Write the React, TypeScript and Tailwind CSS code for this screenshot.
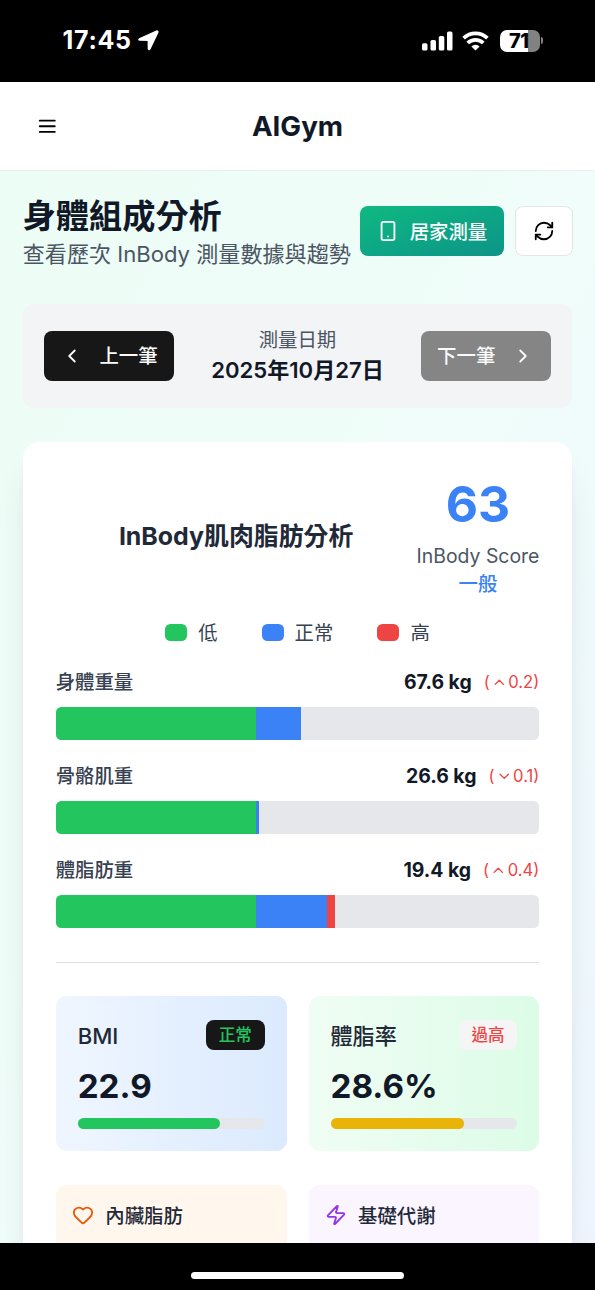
import { ChevronDown, ChevronLeft, ChevronRight, ChevronUp, Heart, RefreshCw, Smartphone, Zap } from "lucide-react";

type Segment = { color: string; width: number };

type Metric = {
  label: string;
  value: string;
  trend: "up" | "down";
  diff: string;
  segments: Segment[];
};

const legend = [
  { label: "低", color: "bg-[#22c55e]" },
  { label: "正常", color: "bg-[#3b82f6]" },
  { label: "高", color: "bg-[#ef4444]" },
];

const metrics: Metric[] = [
  {
    label: "身體重量",
    value: "67.6 kg",
    trend: "up",
    diff: "0.2",
    segments: [
      { color: "bg-[#22c55e]", width: 41.5 },
      { color: "bg-[#3b82f6]", width: 9.2 },
    ],
  },
  {
    label: "骨骼肌重",
    value: "26.6 kg",
    trend: "down",
    diff: "0.1",
    segments: [
      { color: "bg-[#22c55e]", width: 41.5 },
      { color: "bg-[#3b82f6]", width: 0.6 },
    ],
  },
  {
    label: "體脂肪重",
    value: "19.4 kg",
    trend: "up",
    diff: "0.4",
    segments: [
      { color: "bg-[#22c55e]", width: 41.5 },
      { color: "bg-[#3b82f6]", width: 14.7 },
      { color: "bg-[#ef4444]", width: 1.6 },
    ],
  },
];

const stats = [
  {
    label: "BMI",
    value: "22.9",
    status: "正常",
    card: "bg-linear-to-r from-[#eff6ff] to-[#dbeafe]",
    badge: "bg-[#171717] text-[#22c55e]",
    bar: "bg-[#22c55e]",
    percent: 76.3,
  },
  {
    label: "體脂率",
    value: "28.6%",
    status: "過高",
    card: "bg-linear-to-r from-[#f0fdf4] to-[#dcfce7]",
    badge: "bg-[#f5f5f5] text-[#ef4444]",
    bar: "bg-[#eab308]",
    percent: 71.5,
  },
];

function StatusBar() {
  return (
    <div className="flex h-[81.5px] shrink-0 items-center justify-between bg-black pl-[62.5px] pr-[52px] text-white">
      <div className="flex items-center gap-[6px]">
        <span className="text-[25px] font-bold leading-none tracking-[0.7px]">17:45</span>
        <svg width="21" height="21" viewBox="0 0 21 21" fill="currentColor" stroke="currentColor" strokeWidth="1.8" strokeLinejoin="round">
          <path d="M18.6 1.300 1.500 9c-.6.300-.5.900.1.900l8.400.1c.3 0 .5.200.5.500l.1 8.200c0 .800.700 1 1.100.2L19.600 2.300c.3-.700-.3-1.300-1-1Z" />
        </svg>
      </div>
      <div className="flex items-center">
        <svg width="31" height="20" viewBox="0 0 31 20" fill="currentColor">
          <rect x="0" y="12.200" width="5.500" height="7.300" rx="1.600" />
          <rect x="8.500" y="9" width="5.500" height="10.500" rx="1.600" />
          <rect x="16.800" y="5" width="5.500" height="14.500" rx="1.600" />
          <rect x="25" y="0.500" width="5.500" height="19" rx="1.600" />
        </svg>
        <svg className="ml-[9.5px]" width="27" height="20" viewBox="0 0 27 20" fill="none" stroke="currentColor" strokeWidth="3.700">
          <path d="M1.600 7.200a17.300 17.300 0 0 1 23.800 0" />
          <path d="M5.700 12a11.200 11.200 0 0 1 15.600 0" />
          <path d="M13.500 19.600 9.400 15.500a5.900 5.900 0 0 1 8.200 0Z" fill="currentColor" stroke="none" />
        </svg>
        <div className="ml-[11px] flex items-center gap-[1.5px]">
          <div className="flex h-[21.500px] w-[39.500px] items-center justify-center rounded-[7px] bg-linear-to-r from-white from-[71%] to-[#828282] to-[71%] pr-[2px] text-[20px] font-extrabold leading-none tracking-tight text-black">
            71
          </div>
          <div className="h-[7px] w-[2px] rounded-r-full bg-[#828282]" />
        </div>
      </div>
    </div>
  );
}

function Header() {
  return (
    <header className="flex h-[89px] shrink-0 items-center border-b border-[#e9efed] bg-white px-9">
      <button className="w-[22px] pt-[2px]">
        <svg width="22.5" height="22.5" viewBox="0 0 24 24" fill="none" stroke="black" strokeWidth="2" strokeLinecap="round">
          <path d="M4 6h16M4 12h16M4 18h16" />
        </svg>
      </button>
      <h1 className="flex-1 pt-[3px] text-center text-[27.7px] font-bold leading-none text-[#111827]">AIGym</h1>
      <div className="w-[22px]" />
    </header>
  );
}

function MetricRow({ metric }: { metric: Metric }) {
  const Trend = metric.trend === "up" ? ChevronUp : ChevronDown;
  return (
    <div>
      <div className="mb-[10.500px] flex h-[27.5px] items-center justify-between">
        <span className="text-[19.4px] font-medium text-[#374151]">{metric.label}</span>
        <div className="flex items-center gap-[12px]">
          <span className="text-[19.4px] font-bold text-[#111827]">{metric.value}</span>
          <span className="flex items-center text-[16.6px] text-[#ef4444]">
            (
            <Trend className="mx-[1px] size-[16.6px]" />
            {metric.diff})
          </span>
        </div>
      </div>
      <div className="flex h-[33.5px] overflow-hidden rounded-[5.5px] bg-[#e5e7eb]">
        {metric.segments.map((s) => (
          <div key={s.color} className={s.color} style={{ width: `${s.width}%` }} />
        ))}
      </div>
    </div>
  );
}

export default function App() {
  return (
    <div
      lang="zh-TW"
      className="flex h-[1290px] w-full flex-col overflow-hidden bg-white font-['Inter','Noto_Sans_CJK_TC',sans-serif]"
    >
      <StatusBar />
      <Header />

      <main className="min-h-0 flex-1 overflow-hidden bg-linear-to-br from-[#ecfdf5] via-[#f0fdfa] to-[#eff6ff] px-[22.7px] pt-[24px]">
        {/* Title */}
        <div className="-mr-[0.6px] flex h-[73px] items-center justify-between">
          <div className="pt-[5px]">
            <h2 className="text-[33.2px] font-bold leading-[41px] text-[#111827]">身體組成分析</h2>
            <p className="whitespace-nowrap text-[22.1px] leading-[34px] text-[#4b5563]">查看歷次 InBody 測量數據與趨勢</p>
          </div>
          <div className="flex gap-[11px]">
            <button className="flex h-[50px] w-[144px] items-center justify-center gap-[11px] rounded-[8px] bg-linear-to-br from-[#10b981] to-[#0d9488] text-[19.4px] font-medium text-white">
              <Smartphone className="size-[22px]" />
              <span className="pt-[3px]">居家測量</span>
            </button>
            <button className="flex h-[50px] w-[58px] items-center justify-center rounded-[8px] border-[1.5px] border-[#e5e5e5] bg-white text-black">
              <RefreshCw className="size-[22px]" />
            </button>
          </div>
        </div>

        {/* Date switcher */}
        <div className="mt-[36px] flex h-[104px] items-center justify-between rounded-[11px] bg-[#f3f4f6] px-[21.700px]">
          <button className="flex h-[50px] w-[130px] items-center rounded-[8px] bg-[#171717] pl-[16.5px] text-[19.4px] font-medium text-[#fafafa]">
            <ChevronLeft className="mr-[16.5px] size-[22px]" />
            <span className="pt-[2px]">上一筆</span>
          </button>
          <div className="pt-[2px] text-center">
            <div className="text-[19.4px] leading-[28px] text-[#4b5563]">測量日期</div>
            <div className="text-[22.1px] font-semibold leading-[33px] text-[#111827]">2025年10月27日</div>
          </div>
          <button className="flex h-[50px] w-[130px] items-center rounded-[8px] bg-[#858586] pl-[16.5px] text-[19.4px] font-medium text-[#fafafa]">
            <span className="pt-[2px]">下一筆</span>
            <ChevronRight className="ml-[17px] size-[22px]" />
          </button>
        </div>

        {/* Analysis card */}
        <section className="mt-[34px] h-[900px] rounded-[16.6px] bg-white px-[33px] pt-[33px] shadow-[0_28px_35px_-7px_rgba(0,0,0,0.1),0_11px_14px_-8px_rgba(0,0,0,0.1)]">
          <div className="flex h-[122px] items-center">
            <h3 className="flex-1 pt-[2px] text-center text-[24.9px] font-bold leading-none text-[#1f2937]">InBody肌肉脂肪分析</h3>
            <div className="pt-[2px] text-center">
              <div className="text-[49.8px] font-bold leading-[56px] text-[#3b82f6]">63</div>
              <div className="mt-[10px] text-[19.4px] leading-[28px] text-[#4b5563]">InBody Score</div>
              <div className="text-[19.4px] font-medium leading-[28px] text-[#3b82f6]">一般</div>
            </div>
          </div>

          <div className="mt-[22px] flex h-[27.5px] items-center justify-center gap-[44px]">
            {legend.map((l) => (
              <div key={l.label} className="flex items-center gap-[11px]">
                <div className={`h-[17px] w-[22px] rounded-[5.5px] ${l.color}`} />
                <span className="pt-[2px] text-[19.4px] leading-[27px] text-[#374151]">{l.label}</span>
              </div>
            ))}
          </div>

          <div className="mt-[22.800px] flex flex-col gap-[22.500px]">
            {metrics.map((m) => (
              <MetricRow key={m.label} metric={m} />
            ))}
          </div>

          <div className="mt-[33.4px] grid grid-cols-2 gap-x-[22px] gap-y-[34px] border-t border-[#dfe1e4] pt-[33px]">
            {stats.map((s) => (
              <div key={s.label} className={`h-[155px] rounded-[11px] px-[22px] pt-[24px] ${s.card}`}>
                <div className="flex h-[30.5px] items-center justify-between">
                  <span className="pt-[2px] text-[22.1px] font-medium leading-none text-[#1f2937]">{s.label}</span>
                  <span className={`flex h-[30.5px] items-center rounded-[8px] px-[12.7px] pt-[2px] text-[16.6px] font-medium ${s.badge}`}>
                    {s.status}
                  </span>
                </div>
                <div className="mt-[16px] text-[33.2px] font-bold leading-[40px] text-[#111827]">{s.value}</div>
                <div className="mt-[11.5px] h-[11px] rounded-full bg-[#e5e7eb]">
                  <div className={`h-full rounded-full ${s.bar}`} style={{ width: `${s.percent}%` }} />
                </div>
              </div>
            ))}
            <div className="flex h-[120px] items-start gap-[11px] rounded-[11px] bg-[#fff7ed] px-[16.6px] pt-[16px]">
              <Heart className="mt-[3px] size-[22px] text-[#ea580c]" />
              <span className="pt-[1px] text-[19.4px] font-medium leading-[28px] text-[#1f2937]">內臟脂肪</span>
            </div>
            <div className="flex h-[120px] items-start gap-[11px] rounded-[11px] bg-[#faf5ff] px-[16.6px] pt-[16px]">
              <Zap className="mt-[3px] size-[22px] text-[#9333ea]" />
              <span className="pt-[1px] text-[19.4px] font-medium leading-[28px] text-[#1f2937]">基礎代謝</span>
            </div>
          </div>
        </section>
      </main>

      {/* Home indicator */}
      <div className="flex h-[47.5px] shrink-0 justify-center bg-black pt-[29px]">
        <div className="h-[7px] w-[213px] rounded-full bg-white" />
      </div>
    </div>
  );
}
